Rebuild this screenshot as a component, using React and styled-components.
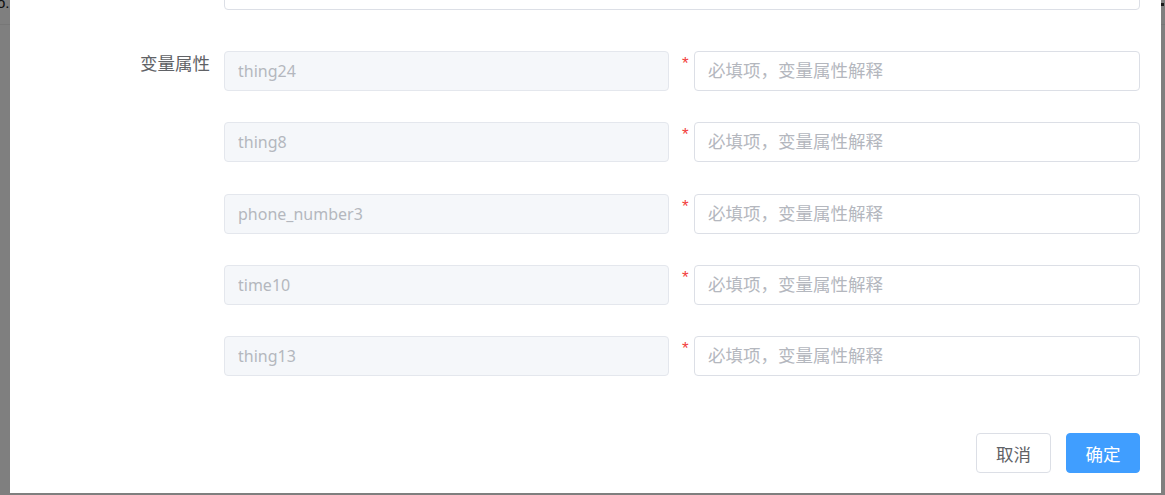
import React from "react";
import styled, { createGlobalStyle } from "styled-components";

const GlobalStyle = createGlobalStyle`
  html, body {
    margin: 0;
    padding: 0;
    height: 100%;
    overflow: hidden;
    background: #ffffff;
    font-family: "Noto Sans", "Noto Sans CJK SC", sans-serif;
  }
  #root {
    height: 100%;
  }
`;

const fields = ["thing24", "thing8", "phone_number3", "time10", "thing13"];

export default function App() {
  return (
    <>
      <GlobalStyle />
      <Page>
        <PageHeader>
          <span className="crumb">o.</span>
          <span className="dot" />
        </PageHeader>
      </Page>
      <Overlay>
        <Dialog>
          <TopRow>
            <Label />
            <Input type="text" readOnly />
          </TopRow>
          <Rows>
            {fields.map((field, index) => (
              <Row key={field}>
                <Label>{index === 0 ? "变量属性" : ""}</Label>
                <Pair>
                  <Input type="text" value={field} readOnly $disabled />
                  <Star>*</Star>
                  <Input type="text" placeholder="必填项，变量属性解释" />
                </Pair>
              </Row>
            ))}
          </Rows>
          <Footer>
            <Button>取消</Button>
            <Button $primary>确定</Button>
          </Footer>
        </Dialog>
      </Overlay>
    </>
  );
}

const Page = styled.div`
  height: 100%;
  background: #ffffff;
`;

const PageHeader = styled.div`
  height: 24px;
  border-bottom: 1px solid #eeeeee;
  display: flex;
  justify-content: space-between;
  align-items: flex-start;
  .crumb {
    margin-left: -3px;
    margin-top: -6px;
    font-family: "Liberation Sans", sans-serif;
    font-size: 15px;
    color: #222222;
  }
  .dot {
    width: 3px;
    height: 3px;
    margin: 3px 1px 0 0;
    background: #333333;
  }
`;

const Overlay = styled.div`
  position: fixed;
  inset: 0;
  background: rgba(0, 0, 0, 0.5);
  overflow: hidden;
  display: flex;
  flex-direction: column;
  justify-content: flex-end;
  align-items: flex-start;
  padding: 0 0 2px 10px;
`;

const Dialog = styled.div`
  flex-shrink: 0;
  width: 1151px;
  box-sizing: border-box;
  background: #ffffff;
  padding: 0 21px 20px 20px;
  display: flex;
  flex-direction: column;
`;

const TopRow = styled.div`
  display: flex;
  margin-bottom: 41px;
`;

const Rows = styled.div`
  display: flex;
  flex-direction: column;
  gap: 31.25px;
`;

const Row = styled.div`
  display: flex;
`;

const Label = styled.div`
  width: 194px;
  flex-shrink: 0;
  box-sizing: border-box;
  padding-right: 14px;
  text-align: right;
  font-family: "Noto Sans CJK SC", sans-serif;
  font-size: 17.5px;
  line-height: 24px;
  color: #606266;
`;

const Pair = styled.div`
  flex: 1;
  display: grid;
  grid-template-columns: 445px 25px 1fr;
`;

const Star = styled.span`
  color: #f23d3d;
  font-family: "Liberation Sans", sans-serif;
  font-size: 17px;
  line-height: 17px;
  padding-top: 4px;
  padding-left: 13px;
`;

const Input = styled.input`
  flex: 1;
  min-width: 0;
  height: 40px;
  box-sizing: border-box;
  padding: 0 13px;
  border-radius: 4px;
  outline: none;
  border: 1px solid ${(p) => (p.$disabled ? "#e4e7ed" : "#dcdfe6")};
  background: ${(p) => (p.$disabled ? "#f5f7fa" : "#ffffff")};
  color: ${(p) => (p.$disabled ? "#b4b7be" : "#606266")};
  font-family: "Noto Sans", "Noto Sans CJK SC", sans-serif;
  font-size: 16px;
  &::placeholder {
    font-family: "Noto Sans CJK SC", sans-serif;
    font-size: 17.5px;
    color: #b4b7be;
  }
`;

const Footer = styled.div`
  display: flex;
  justify-content: flex-end;
  gap: 15px;
  margin-top: 57px;
`;

const Button = styled.button`
  height: 40px;
  width: ${(p) => (p.$primary ? "74px" : "75px")};
  box-sizing: border-box;
  border-radius: 4px;
  border: 1px solid ${(p) => (p.$primary ? "#409eff" : "#dcdfe6")};
  background: ${(p) => (p.$primary ? "#409eff" : "#ffffff")};
  color: ${(p) => (p.$primary ? "#ffffff" : "#606266")};
  font-family: "Noto Sans CJK SC", sans-serif;
  font-size: 17.5px;
  padding: 0;
  cursor: pointer;
`;
